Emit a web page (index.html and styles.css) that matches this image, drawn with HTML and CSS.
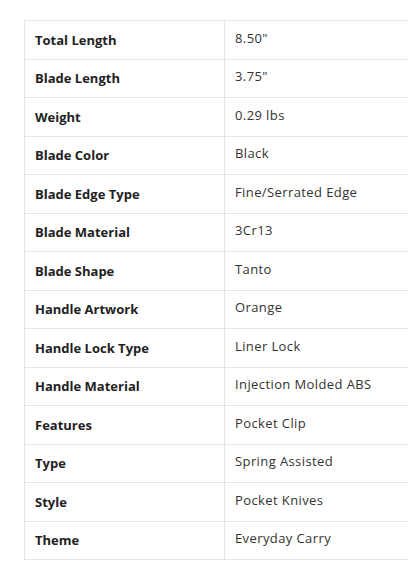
FILE: index.html
```html
<!DOCTYPE html>
<html>
<head>
<meta charset="utf-8">
<link rel="stylesheet" href="styles.css">
</head>
<body>
<table class="specs">
  <tbody>
    <tr><th>Total Length</th><td>8.50"</td></tr>
    <tr><th>Blade Length</th><td>3.75"</td></tr>
    <tr><th>Weight</th><td>0.29 lbs</td></tr>
    <tr><th>Blade Color</th><td>Black</td></tr>
    <tr><th>Blade Edge Type</th><td>Fine/Serrated Edge</td></tr>
    <tr><th>Blade Material</th><td>3Cr13</td></tr>
    <tr><th>Blade Shape</th><td>Tanto</td></tr>
    <tr><th>Handle Artwork</th><td>Orange</td></tr>
    <tr><th>Handle Lock Type</th><td>Liner Lock</td></tr>
    <tr><th>Handle Material</th><td>Injection Molded ABS</td></tr>
    <tr><th>Features</th><td>Pocket Clip</td></tr>
    <tr><th>Type</th><td>Spring Assisted</td></tr>
    <tr><th>Style</th><td>Pocket Knives</td></tr>
    <tr><th>Theme</th><td>Everyday Carry</td></tr>
  </tbody>
</table>
</body>
</html>
```
FILE: styles.css
```css
html, body {
  margin: 0;
  padding: 0;
  background: #fff;
  overflow: hidden;
}
body {
  padding: 20px 0 0 24px;
  font-family: "Open Sans", "Liberation Sans", sans-serif;
}
.specs {
  border-collapse: collapse;
  width: 385px;
  table-layout: fixed;
}
.specs th, .specs td {
  border: 1px solid #e6e6e6;
  height: 38.5px;
  padding: 0 10px;
  text-align: left;
  box-sizing: border-box;
}
.specs th {
  width: 200px;
  font-weight: 700;
  font-size: 13px;
  color: #222;
  padding-top: 0;
}
.specs td {
  font-size: 13px;
  font-weight: 400;
  color: #333;
  padding-bottom: 4px;
  letter-spacing: 0.4px;
}
```
